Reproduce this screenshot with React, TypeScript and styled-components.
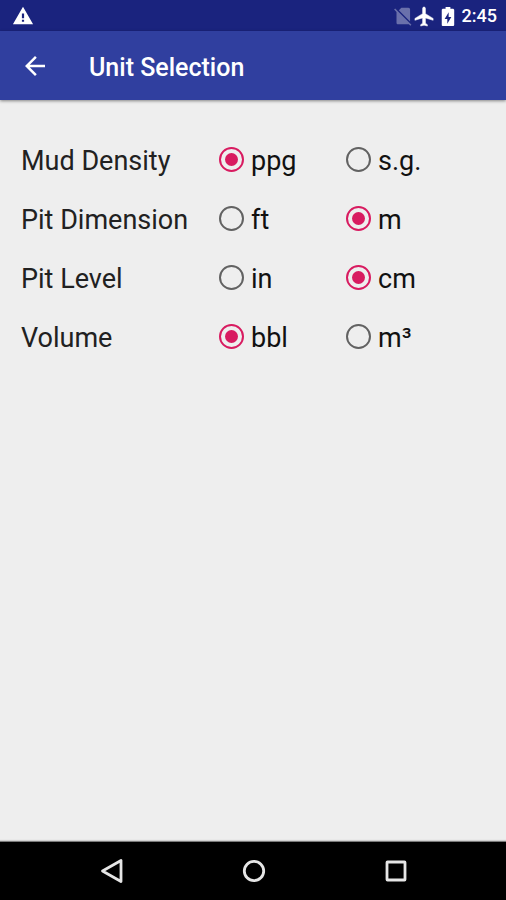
import React, { useId, useState } from "react";
import styled, { createGlobalStyle } from "styled-components";

const GlobalStyle = createGlobalStyle`
  *, *::before, *::after { box-sizing: border-box; }
  body {
    margin: 0;
    background: #eeeeee;
    color: #212121;
    font-family: Roboto, "Liberation Sans", sans-serif;
  }
`;

const Screen = styled.div`
  display: flex;
  flex-direction: column;
  min-height: 100vh;
`;

const StatusBar = styled.div`
  display: flex;
  align-items: center;
  justify-content: space-between;
  height: 31px;
  padding: 1px 9px 0 12px;
  background: #1a237e;
  color: #ffffff;
`;

const StatusIcons = styled.div`
  display: flex;
  align-items: center;
`;

const StatusIcon = styled.svg<{ $size: number; $dim?: boolean }>`
  display: block;
  width: ${(p) => p.$size}px;
  height: ${(p) => p.$size}px;
  fill: currentColor;
  opacity: ${(p) => (p.$dim ? 0.35 : 1)};
`;

const Clock = styled.time`
  margin-left: 3px;
  font-size: 18px;
  font-weight: 500;
  line-height: 24px;
`;

const Toolbar = styled.header`
  display: flex;
  align-items: center;
  gap: 39px;
  height: 69px;
  padding: 0 20px;
  background: #303f9f;
  color: #ffffff;
  box-shadow: 0 1px 3px rgba(0, 0, 0, 0.45);
`;

const IconButton = styled.button`
  display: flex;
  padding: 0;
  border: 0;
  background: none;
  color: inherit;
  cursor: pointer;

  svg {
    display: block;
    width: 30px;
    height: 30px;
    fill: currentColor;
  }
`;

const Title = styled.h1`
  margin: 0;
  padding-top: 4px;
  font-size: 25px;
  font-weight: 500;
  line-height: 32px;
`;

const Content = styled.main`
  flex: 1;
  padding: 30px 21px;
`;

const Row = styled.div`
  display: grid;
  grid-template-columns: 198fr 127fr 139fr;
  align-items: center;
  height: 59px;
`;

const RowLabel = styled.span`
  padding-top: 2px;
  font-size: 27px;
  line-height: 32px;
  white-space: nowrap;
`;

const Option = styled.label`
  display: flex;
  align-items: center;
  gap: 7px;
  cursor: pointer;
`;

const OptionText = styled.span`
  padding-top: 3px;
  color: #111111;
  font-size: 27px;
  line-height: 32px;
`;

const Radio = styled.input`
  appearance: none;
  display: grid;
  place-items: center;
  flex: none;
  width: 25px;
  height: 25px;
  margin: 0;
  border: 2px solid #626262;
  border-radius: 50%;
  cursor: pointer;

  &:checked {
    border-color: #d81b60;
  }

  &:checked::before {
    content: "";
    width: 13px;
    height: 13px;
    border-radius: 50%;
    background: #d81b60;
  }
`;

const NavBar = styled.nav`
  display: flex;
  justify-content: center;
  height: 59px;
  border-top: 1px solid #7a7a7a;
  background: #000000;
  color: #e6e6e6;
  box-shadow: 0 -1px 1px rgba(0, 0, 0, 0.12);
`;

const NavButton = styled.button`
  display: grid;
  place-items: center;
  flex: 0 1 28%;
  padding: 0 0 0 2px;
  border: 0;
  background: none;
  color: inherit;
  cursor: pointer;

  svg {
    display: block;
    width: 26px;
    height: 26px;
    fill: none;
    stroke: currentColor;
    stroke-width: 2.8;
    stroke-linejoin: round;
  }
`;

interface Setting {
  label: string;
  units: string[];
  initial: string;
}

const settings: Setting[] = [
  { label: "Mud Density", units: ["ppg", "s.g."], initial: "ppg" },
  { label: "Pit Dimension", units: ["ft", "m"], initial: "m" },
  { label: "Pit Level", units: ["in", "cm"], initial: "cm" },
  { label: "Volume", units: ["bbl", "m³"], initial: "bbl" },
];

function UnitRow({ label, units, initial }: Setting) {
  const id = useId();
  const [selected, setSelected] = useState(initial);
  return (
    <Row role="radiogroup" aria-labelledby={id}>
      <RowLabel id={id}>{label}</RowLabel>
      {units.map((unit) => (
        <Option key={unit}>
          <Radio
            type="radio"
            name={label}
            value={unit}
            checked={selected === unit}
            onChange={() => setSelected(unit)}
          />
          <OptionText>{unit}</OptionText>
        </Option>
      ))}
    </Row>
  );
}

export default function App() {
  return (
    <Screen>
      <GlobalStyle />
      <StatusBar>
        <StatusIcon $size={22} viewBox="0 0 24 24" aria-label="Warning">
          <path d="M1 21h22L12 2 1 21zm12.200-2.600h-2.400v-2.400h2.400v2.400zm0-4h-2.400v-5h2.400v5z" />
        </StatusIcon>
        <StatusIcons>
          <StatusIcon $size={20} $dim viewBox="0 0 24 24" aria-label="No SIM">
            <path d="M20.500 4c0-1.100-.9-2-2-2h-8.500L7 5.200 20.500 18.700zM2.600 3 1.300 4.300 4.200 7.200V20c0 1.100.9 2 2 2h12.800l1.800 1.800 1.300-1.300z" />
          </StatusIcon>
          <StatusIcon $size={23} viewBox="0 0 24 24" aria-label="Airplane mode">
            <path
              d="M21 16v-2l-8-5V3.500c0-.83-.67-1.500-1.500-1.500S10 2.670 10 3.500V9l-8 5v2l8-2.500V19l-2 1.500V22l3.500-1 3.500 1v-1.500L13 19v-5.500l8 2.500z"
              stroke="currentColor"
              strokeWidth="0.5"
            />
          </StatusIcon>
          <StatusIcon $size={23} viewBox="0 0 24 24" aria-label="Charging">
            <path d="M17.200 4H15V2H10v2H7.800C6.500 4 6 4.600 6 5.500v15C6 21.500 6.600 22 7.500 22h10c1 0 1.500-.6 1.500-1.500v-15C19 4.600 18.400 4 17.200 4zM11.800 19.500v-5H9L13.200 7.500v5H16z" />
          </StatusIcon>
          <Clock>2:45</Clock>
        </StatusIcons>
      </StatusBar>
      <Toolbar>
        <IconButton type="button" aria-label="Back">
          <svg viewBox="0 0 24 24">
            <path d="M20 11H7.830l5.590-5.590L12 4l-8 8 8 8 1.410-1.410L7.830 13H20v-2z" />
          </svg>
        </IconButton>
        <Title>Unit Selection</Title>
      </Toolbar>
      <Content>
        {settings.map((s) => (
          <UnitRow key={s.label} {...s} />
        ))}
      </Content>
      <NavBar aria-label="System">
        <NavButton type="button" aria-label="Back">
          <svg viewBox="0 0 26 26">
            <path d="M22 2.500v21L3.500 13z" />
          </svg>
        </NavButton>
        <NavButton type="button" aria-label="Home">
          <svg viewBox="0 0 26 26">
            <circle cx="13" cy="13" r="9.700" />
          </svg>
        </NavButton>
        <NavButton type="button" aria-label="Recent apps">
          <svg viewBox="0 0 26 26">
            <rect x="4" y="4" width="18" height="18" rx="0.500" />
          </svg>
        </NavButton>
      </NavBar>
    </Screen>
  );
}
